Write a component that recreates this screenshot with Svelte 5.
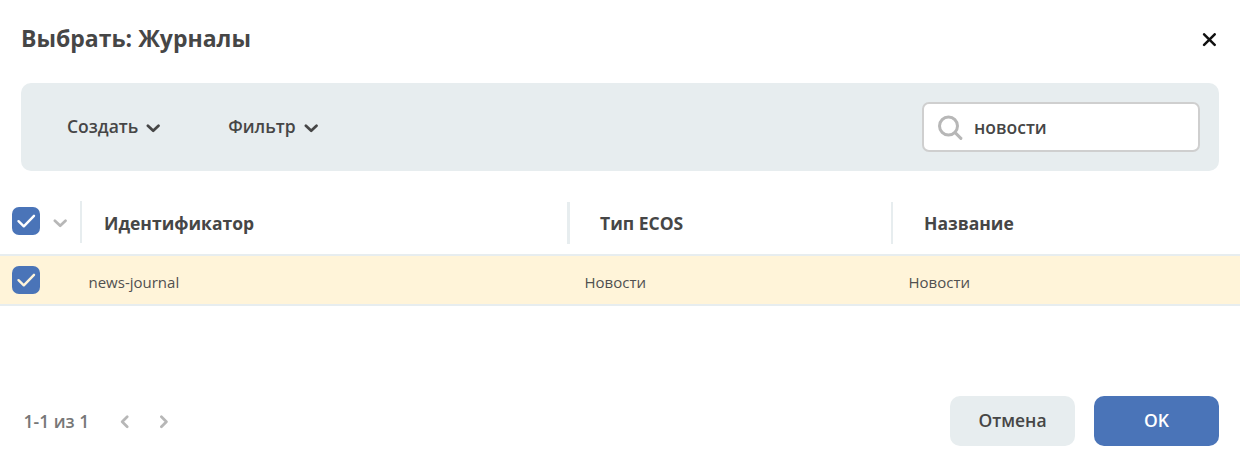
<script>
  const columns = ['Идентификатор', 'Тип ECOS', 'Название'];
  const row = ['news-journal', 'Новости', 'Новости'];
</script>

{#snippet chevron()}
  <svg class="chevron" width="14" height="10" viewBox="0 0 14 10"><path d="M1.9 2.7 7.2 7.8 12.5 2.7" /></svg>
{/snippet}

{#snippet checkbox()}
  <span class="checkbox" role="checkbox" aria-checked="true" tabindex="0">
    <svg width="28" height="28" viewBox="0 0 28 28"><path d="M6.5 14.2 11.8 19.3 22 8.8" /></svg>
  </span>
{/snippet}

<div class="dialog">
  <header>
    <h1>Выбрать: Журналы</h1>
    <button class="close" aria-label="Закрыть">
      <svg width="14" height="14" viewBox="0 0 14 14"><path d="M2.1 1.3 12.7 11.9M12.7 1.3 2.1 11.9" /></svg>
    </button>
  </header>

  <div class="toolbar">
    <button class="menu create">Создать {@render chevron()}</button>
    <button class="menu filter">Фильтр {@render chevron()}</button>
    <div class="search">
      <svg width="26" height="26" viewBox="0 0 26 26"><circle cx="10.5" cy="11" r="9" /><path d="M17.1 17.6 22.9 23.4" /></svg>
      <span>новости</span>
    </div>
  </div>

  <div class="table">
    <div class="row head">
      <div class="select">{@render checkbox()}{@render chevron()}</div>
      {#each columns as name}
        <div class="cell">{name}</div>
      {/each}
    </div>
    <div class="row body">
      <div class="select">{@render checkbox()}</div>
      {#each row as value}
        <div class="cell">{value}</div>
      {/each}
    </div>
  </div>

  <footer>
    <span class="count">1-1 из 1</span>
    <svg class="prev" width="10" height="14" viewBox="0 0 10 14"><path d="M8.2 1.7 3.2 6.7 8.2 11.7" /></svg>
    <svg class="next" width="10" height="14" viewBox="0 0 10 14"><path d="M2.4 1.7 7.4 6.7 2.4 11.7" /></svg>
    <button class="action cancel">Отмена</button>
    <button class="action ok">OK</button>
  </footer>
</div>

<style>
  :global(body) { background: #fff; }
  .dialog {
    box-sizing: border-box;
    width: 1240px;
    height: 467px;
    overflow: hidden;
    display: flex;
    flex-direction: column;
    font-family: "Open Sans", sans-serif;
    color: #464646;
    white-space: nowrap;
  }
  button { border: 0; padding: 0; background: none; color: inherit; font: inherit; }
  svg { display: block; fill: none; stroke: currentColor; stroke-width: 2.7; stroke-linecap: round; stroke-linejoin: round; flex: none; }
  header { height: 83px; padding: 0 24px 0 21px; display: flex; justify-content: space-between; box-sizing: border-box; }
  h1 { margin: 22px 0 0; font-size: 23px; line-height: 32px; font-weight: 700; }
  .close { height: 14px; margin-top: 33px; color: #111; }
  .close svg { stroke-width: 2.5; }
  .toolbar {
    margin: 0 21px;
    height: 88px;
    box-sizing: border-box;
    padding: 0 19px 0 46px;
    border-radius: 10px;
    background: #e7edef;
    display: flex;
    align-items: center;
    font-size: 17.5px;
    font-weight: 600;
  }
  .menu { display: flex; align-items: center; gap: 8px; line-height: 24px; margin-bottom: 2px; }
  .menu .chevron { margin-top: 3px; }
  .filter { margin-left: 67.8px; }
  .search {
    box-sizing: border-box;
    margin-left: auto;
    width: 278px;
    height: 50px;
    border: 2px solid #cfcfcf;
    border-radius: 7px;
    background: #fff;
    display: flex;
    align-items: center;
    gap: 10px;
    padding-left: 14px;
  }
  .search svg { color: #b7b7b7; stroke-width: 3; margin-top: 2px; }
  .table { margin-top: 30px; }
  .row { display: grid; grid-template-columns: 80px 487px 324px 1fr; }
  .head { height: 53px; font-size: 17.5px; font-weight: 700; }
  .head .cell { height: 42px; margin-top: 1px; border-left: 2px solid #e7edef; padding-left: 22px; line-height: 42px; box-sizing: border-box; }
  .head .cell:nth-child(2) { height: 42px; margin-top: 0; line-height: 44px; }
  .head .cell:nth-child(3) { border-left-width: 3px; padding-left: 30px; }
  .head .cell:nth-child(4) { padding-left: 31px; }
  .select { display: flex; align-items: flex-start; gap: 13px; padding: 6px 0 0 12px; }
  .select > .chevron { color: #b7b7b7; margin-top: 11px; }
  .checkbox { width: 28.4px; height: 28px; border-radius: 7px; background: #4a74b8; color: #fff; }
  .checkbox svg { stroke-width: 2.4; }
  .body { height: 52px; box-sizing: border-box; border: solid #e7edef; border-width: 2px 0; background: #fff4d9; font-size: 15px; color: #505050; }
  .body .select { padding-top: 10px; }
  .body .checkbox { color: #fff4d9; }
  .body .cell { padding-left: 8.5px; line-height: 53px; }
  .body .cell:nth-child(n + 3) { padding-left: 17.5px; }
  footer { margin-top: 90px; height: 50px; padding: 0 21px 0 23.5px; display: flex; align-items: center; font-size: 17.5px; font-weight: 600; }
  .count { color: #777; width: 95.5px; margin-bottom: 1px; }
  footer svg { color: #b7b7b7; margin-top: 2px; }
  .next { margin-left: 30px; }
  .action { width: 125px; height: 50px; border-radius: 10px; padding-bottom: 2px; }
  .cancel { margin-left: auto; background: #e7edef; }
  .ok { margin-left: 19px; background: #4a74b8; color: #fff; }
</style>
